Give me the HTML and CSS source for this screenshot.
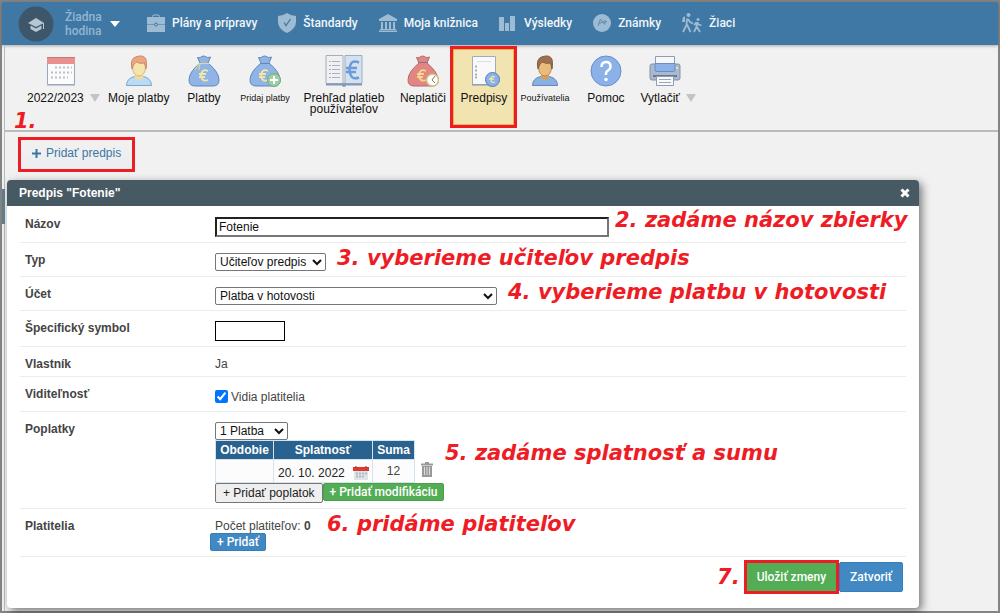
FILE: index.html
```
<!DOCTYPE html>
<html lang="sk">
<head>
  <meta charset="UTF-8" />
  <meta name="viewport" content="width=device-width, initial-scale=1" />
  <title>Predpisy - Platby</title>
  <link rel="stylesheet" href="styles.css">
</head>
<body>
<div class="frame">

  <!-- Horné menu -->
  <header class="topbar">
    <button class="profile" type="button">
      <svg class="avatar" viewBox="0 0 36 36">
        <circle cx="18" cy="18" r="17.500" fill="#3d566a"/>
        <path d="M10 17l8-5 8 5-8 4z" fill="#b5c7d4"/>
        <path d="M12.500 19.500v3.500l5.500 3 5.500-3v-3.500L18 22.500z" fill="#b5c7d4"/>
        <path d="M25.500 17v6" stroke="#b5c7d4"/>
      </svg>
      <span>Žiadna<br>hodina</span>
      <svg class="caret" viewBox="0 0 10 6"><path d="M0 0h10L5 6z" fill="#fff"/></svg>
    </button>
    <nav class="menu">
      <a href="#">
        <svg viewBox="0 0 18 20"><path d="M5.500 5V3.500Q5.500 2 7 2h4q1.500 0 1.500 1.500V5" fill="none" stroke="#a2bfd5"/><path d="M0 4h18v7H0zM0 11.500h18V19H0z" fill="#9dbbd2"/><path d="M0 11.500h18" stroke="#6c98bb"/><circle cx="9" cy="11.500" r="1.500" fill="#9dbbd2" stroke="#3f78a5"/></svg>
        Plány a prípravy</a>
      <a href="#">
        <svg viewBox="0 0 18 20"><path d="M9 0q4 3 9 3v6q0 7-9 11Q0 16 0 9V3q5 0 9-3z" fill="#9dbbd2"/><path d="M6 9.500l2 3 4.500-6.500" fill="none" stroke="#3f78a5" stroke-width="1.300"/></svg>
        Štandardy</a>
      <a href="#">
        <svg viewBox="0 0 18 20"><path d="M0 6l9-5 9 5v2H0zM2 9h2v7H2zM6 9h2v7H6zM10 9h2v7h-2zM14 9h2v7h-2zM1 16h16v1H1zM0 17.500h18V19H0z" fill="#9dbbd2"/></svg>
        Moja knižnica</a>
      <a href="#">
        <svg viewBox="0 0 18 20"><path d="M0 4h5v14H0zM6 10h4v8H6zM11 3h5v15h-5z" fill="#9dbbd2"/></svg>
        Výsledky</a>
      <a href="#">
        <svg viewBox="0 0 18 20"><circle cx="9" cy="10" r="9" fill="#9dbbd2"/><path d="M5 13l2.500-7 4 5.500M6 10.500l4-1.500M12 7v4M10 9l4-.5" fill="none" stroke="#5f8eb3"/></svg>
        Známky</a>
      <a href="#">
        <svg class="walkers" viewBox="0 0 20 20"><g fill="#9dbbd2"><circle cx="6.500" cy="2" r="2"/><circle cx="16" cy="6.500" r="1.500"/><path d="M1 4l2-.5V9H0z"/></g><path d="M5 5.500L4.500 12 1 19M5 11.500l3.500 7.500M6 6l2 3 3 1.500M15 9l-.5 5-2.500 5M15 14l3 5M15.500 9.500l1 2 3 1M14.500 9.500L12 12" fill="none" stroke="#9dbbd2" stroke-width="1.800"/></svg>
        Žiaci</a>
    </nav>
  </header>

  <div class="page">
    <span class="side-tab"></span>

    <!-- Lišta s nástrojmi -->
    <div class="toolbar">
      <a class="tool has-drop" href="#">
        <svg viewBox="0 0 32 32"><path d="M2.500 2.500h27v27h-27z" fill="#fbfbfb" stroke="#9aa8bb"/><path d="M2 2h28v7H2z" fill="#e8918e"/><path d="M2 2.500h28" stroke="#c87676"/><path d="M10 12.500h17M6 17.500h21M6 22.500h17" stroke="#b9c1cd" stroke-width="2" stroke-dasharray="2 2"/><path d="M2 30h28" stroke="#96a5bb"/></svg>
        <span class="tool-label">2022/2023 <i class="drop"></i></span>
      </a>
      <a class="tool" href="#">
        <svg viewBox="0 0 32 32"><path d="M3.500 30.500q0-7 8-9h9q8 2 8 9z" fill="#b9dcf2" stroke="#7ea7c8"/><path d="M12 17h8v6q-4 4-8 0z" fill="#f0dc9c"/><path d="M9.500 9q0-4 6.500-4t6.500 4v4q-1 8-6.500 8T9.500 13z" fill="#f5e5ac" stroke="#d5b778"/><path d="M9 14Q6.500 3 14 1.500q7-2 9 3 1 4 0 9.500l-1.500-6q-5 1-8-1-3 1-4.500 7z" fill="#eda681" stroke="#c6886a"/></svg>
        <span class="tool-label">Moje platby</span>
      </a>
      <a class="tool" href="#">
        <svg viewBox="0 0 32 32"><path d="M12 8L9.500 2.500q3 1 4-1 2.500-1 4 0 2 2 5 .5L20 8q11 9 11 17 0 6-6 6H7q-6 0-6-6 0-8 11-17z" fill="#8fb4e5" stroke="#6287bb"/><path d="M11 8.500h10M11 9l-4 6M12 9l-1 6" stroke="#e5d697" fill="none"/><path d="M20 16q-6-3-7 4.500 1 7 7 4.500M11 19h7M11 22h6" fill="none" stroke="#f3e6a9" stroke-width="1.800"/></svg>
        <span class="tool-label">Platby</span>
      </a>
      <a class="tool" href="#">
        <svg viewBox="0 0 32 32"><path d="M12 8L9.500 2.500q3 1 4-1 2.500-1 4 0 2 2 5 .5L20 8q11 9 11 17 0 6-6 6H7q-6 0-6-6 0-8 11-17z" fill="#8fb4e5" stroke="#6287bb"/><path d="M11 8.500h10" stroke="#6287bb"/><path d="M19 16q-6-3-7 4.500 1 7 7 4.500M10 19h7M10 22h6" fill="none" stroke="#f3e6a9" stroke-width="1.800"/><circle cx="25" cy="25" r="6.500" fill="#9bd0a4" stroke="#75aa80"/><path d="M21 25h8M25 21v8" stroke="#fff" stroke-width="2"/></svg>
        <span class="tool-label small">Pridaj platby</span>
      </a>
      <a class="tool wide" href="#">
        <svg class="book" viewBox="0 0 38 32"><path d="M1 .5h17v28H1z" fill="#eef0f2" stroke="#a5afbd"/><path d="M20 .5h17v28H20z" fill="#d5e1ed" stroke="#97aec8"/><path d="M1 29.500h36" stroke="#8199bb" stroke-width="2"/><circle cx="19" cy="30" r="2" fill="#8199bb"/><path d="M4 6.500h2m1 0h8M4 10.500h2m1 0h8M4 14.500h2m1 0h8M4 18.500h2m1 0h8M4 22.500h2m1 0h8" stroke="#aab1bb"/><path d="M34 7.500q-9-4-9.500 7.500 1 11 9.500 7.500M21 13h11M21 17h10" fill="none" stroke="#6b9bdc" stroke-width="2.500"/></svg>
        <span class="tool-label">Prehľad platieb používateľov</span>
      </a>
      <a class="tool" href="#">
        <svg viewBox="0 0 32 32"><path d="M12 8L9.500 2.500q3 1 4-1 2.500-1 4 0 2 2 5 .5L20 8q11 9 11 17 0 6-6 6H7q-6 0-6-6 0-8 11-17z" fill="#e28684" stroke="#b46b70"/><path d="M11 7.500h10" stroke="#8b6d92"/><path d="M19 16q-6-3-7 4.500 1 7 7 4.500M10 19h7M10 22h6" fill="none" stroke="#f2d88e" stroke-width="1.800"/><circle cx="25.500" cy="25" r="6" fill="#fff" stroke="#d6bb78" stroke-width="1.500"/><path d="M28 21l-3 4 3 3" fill="none" stroke="#777"/></svg>
        <span class="tool-label">Neplatiči</span>
      </a>
      <a class="tool active" href="#">
        <svg viewBox="0 0 32 32"><path d="M4.500 1.500h23v28h-23z" fill="#f9f9f9" stroke="#9eacbe"/><path d="M4 30h24" stroke="#8197b7"/><path d="M9 6.500h14" stroke="#dadde1"/><path d="M7 11.500h2M7 15.500h2M7 19.500h2M7 22.500h2" stroke="#a8b0bd" stroke-width="2"/><circle cx="24.500" cy="24.500" r="7" fill="#8ab2e9" stroke="#527fba"/><path d="M27 22q-4-2-4 2.500 0 4 4 2.500M21 24h5" fill="none" stroke="#f3e6a9" stroke-width="1.300"/></svg>
        <span class="tool-label">Predpisy</span>
      </a>
      <a class="tool" href="#">
        <svg viewBox="0 0 32 32"><path d="M3.500 30.500q0-7 8-9h9q8 2 8 9z" fill="#8ab0e2" stroke="#6488be"/><path d="M12 17h8v6q-4 4-8 0z" fill="#d5a05f"/><path d="M9.500 9q0-4 6.500-4t6.500 4v4q-1 8-6.500 8T9.500 13z" fill="#e8bd7c" stroke="#bb8850"/><path d="M9 14Q6.500 3 14 1.500q7-2 9 3 1 4 0 9.500l-1.500-6q-5 1-8-1-3 1-4.500 7z" fill="#a06f50" stroke="#835a42"/></svg>
        <span class="tool-label small">Používatelia</span>
      </a>
      <a class="tool" href="#">
        <svg viewBox="0 0 32 32"><circle cx="16" cy="16" r="15" fill="#8ab1e8" stroke="#678fc4"/><path d="M11.500 12q0-5 4.500-5t4.500 4.500q0 2.500-2.500 4t-2 4.500" fill="none" stroke="#fff" stroke-width="2.500"/><circle cx="16" cy="24.500" r="1.700" fill="#fff"/></svg>
        <span class="tool-label">Pomoc</span>
      </a>
      <a class="tool has-drop" href="#">
        <svg viewBox="0 0 32 32"><rect x="1" y="9" width="30" height="16" rx="2" fill="#abb9cc" stroke="#8393aa"/><path d="M6.500 1.500h19V10h-19z" fill="#f7f7f7" stroke="#8d9db3"/><path d="M6 8.500h20V15q0 1.500-2 1.500H8q-2 0-2-1.500z" fill="#8ab1e8" stroke="#678fc4"/><path d="M4 21h24" stroke="#68798f" stroke-width="2"/><path d="M7.500 21.500h17v9h-17z" fill="#f9f9f9" stroke="#8d9db3"/><path d="M10 24.500h12M10 27.500h12" stroke="#99a5b5"/><path d="M27 12h2v2h-2z" fill="#f2e2a3"/></svg>
        <span class="tool-label">Vytlačiť <i class="drop"></i></span>
      </a>
      <span class="note note-toolbar">1.</span>
    </div>

    <main class="content">
      <button class="add-rule" type="button"><svg viewBox="0 0 9 9"><path d="M0 4.500h9M4.500 0v9" stroke="#3d76a3" stroke-width="2"/></svg>Pridať predpis</button>

      <!-- Dialóg predpisu -->
      <section class="dialog">
        <div class="dialog-head">
          <h2>Predpis "Fotenie"</h2>
          <button class="close" type="button" aria-label="Zavrieť"><svg viewBox="0 0 10 10"><path d="M1.500 1.500l7 7M8.500 1.500l-7 7" stroke="#fff" stroke-width="3"/></svg></button>
        </div>
        <form class="dialog-body">
          <div class="row">
            <label class="name" for="nazov">Názov</label>
            <div class="value"><input class="text-input" id="nazov" type="text" value="Fotenie"><span class="note high">2. zadáme názov zbierky</span></div>
          </div>
          <div class="row">
            <label class="name" for="typ">Typ</label>
            <div class="value"><select class="type" id="typ"><option>Učiteľov predpis</option></select><span class="note">3. vyberieme učiteľov predpis</span></div>
          </div>
          <div class="row">
            <label class="name" for="ucet">Účet</label>
            <div class="value"><select class="account" id="ucet"><option>Platba v hotovosti</option></select><span class="note">4. vyberieme platbu v hotovosti</span></div>
          </div>
          <div class="row">
            <label class="name" for="symbol">Špecifický symbol</label>
            <div class="value"><input class="symbol" id="symbol" type="text"></div>
          </div>
          <div class="row">
            <span class="name">Vlastník</span>
            <div class="value">Ja</div>
          </div>
          <div class="row">
            <span class="name">Viditeľnosť</span>
            <div class="value"><label class="check"><input type="checkbox" checked> Vidia platitelia</label></div>
          </div>
          <div class="row">
            <label class="name" for="poplatky">Poplatky</label>
            <div class="value">
              <select class="count" id="poplatky"><option>1 Platba</option></select>
              <div class="fees">
                <table>
                  <thead><tr><th class="period">Obdobie</th><th class="due">Splatnosť</th><th class="sum">Suma</th></tr></thead>
                  <tbody><tr>
                    <td></td>
                    <td><span class="date">20. 10. 2022 <svg viewBox="0 0 16 14"><path d="M1 4h14v10H1z" fill="#dfe4e7"/><path d="M0 1h16v4H0z" fill="#dc3b33"/><path d="M3 0v2M13 0v2" stroke="#8b2924"/><path d="M3 7.500h11M3 10.500h8" stroke="#a9bbc5" stroke-width="2" stroke-dasharray="2 1"/></svg></span></td>
                    <td class="amount">12</td>
                  </tr></tbody>
                </table>
                <button class="trash" type="button" aria-label="Zmazať"><svg viewBox="0 0 12 15"><path d="M0 2.500h12M4 1h4" stroke="#999" stroke-width="2"/><path d="M1 4h10v11H1z" fill="#999"/><path d="M3.500 5v8M6 5v8M8.500 5v8" stroke="#ddd"/></svg></button>
                <span class="note">5. zadáme splatnosť a sumu</span>
              </div>
              <div class="fee-buttons"><button class="plain" type="button">+ Pridať poplatok</button><button class="btn green" type="button">+ Pridať modifikáciu</button></div>
            </div>
          </div>
          <div class="row">
            <span class="name">Platitelia</span>
            <div class="value">
              <div class="payers">Počet platiteľov: <b>0</b><span class="note">6. pridáme platiteľov</span></div>
              <button class="btn blue payers-add" type="button">+ Pridať</button>
            </div>
          </div>
          <div class="dialog-foot">
            <span class="note inline">7.</span>
            <button class="btn green save" type="submit">Uložiť zmeny</button>
            <button class="btn blue big" type="button">Zatvoriť</button>
          </div>
        </form>
      </section>
    </main>
  </div>
</div>
</body>
</html>
```
FILE: styles.css
```
* {
  box-sizing: border-box;
}
body {
  margin: 0;
  font-family: "Liberation Sans", Arial, sans-serif;
  font-size: 12px;
  line-height: 14px;
  color: #444;
  background: #f1f1f1;
}
button, input, select {
  font: inherit;
  margin: 0;
}
button {
  cursor: pointer;
}
a {
  color: inherit;
  text-decoration: none;
}
svg {
  display: block;
  flex: none;
}
.frame {
  display: flex;
  flex-direction: column;
  min-height: 100vh;
  border: 2px solid #848484;
}

/* horné menu */
.topbar {
  display: flex;
  align-items: center;
  height: 43px;
  background: #3f78a5;
  font-family: Roboto, "Liberation Sans", sans-serif;
  box-shadow: 0 1px 3px rgba(0,0,0,0.3);
  position: relative;
}
.profile {
  display: flex;
  align-items: center;
  width: 145px;
  padding: 0 0 0 16px;
  border: 0;
  background: none;
  color: #93b6cf;
  font-size: 12px;
  font-weight: 500;
  text-align: left;
}
.profile .avatar {
  width: 36px;
  height: 36px;
  margin-right: 11px;
}
.profile .caret {
  width: 10px;
  height: 6px;
  margin-left: 8px;
}
.menu {
  display: flex;
  gap: 21px;
  padding-bottom: 2px;
}
.menu a {
  display: flex;
  align-items: center;
  gap: 7px;
  color: #f2f6f9;
  font-weight: 500;
  white-space: nowrap;
}
.menu svg {
  width: 18px;
  height: 20px;
}
.menu .walkers {
  width: 20px;
}

.page {
  position: relative;
  flex: 1;
  margin-left: 2px;
  border-left: 1px solid #bbb;
}
.side-tab {
  position: absolute;
  left: -3px;
  top: 144px;
  width: 3px;
  height: 35px;
  background: #607b89;
}

/* nástroje */
.toolbar {
  position: relative;
  display: flex;
  height: 87px;
  padding: 4px 0 5px 18px;
  border-bottom: 2px solid #bbb;
  color: #111;
}
.tool {
  display: flex;
  flex-direction: column;
  align-items: center;
  min-width: 61px;
  padding: 6px 4px 0;
  text-align: center;
}
.tool svg {
  width: 32px;
  height: 32px;
}
.tool .book {
  width: 38px;
}
.has-drop svg {
  margin-right: 6px;
}
.tool-label {
  margin-top: 6px;
  line-height: 11px;
  white-space: nowrap;
}
.tool.wide {
  width: 97px;
}
.wide .tool-label {
  white-space: normal;
}
.tool-label.small {
  font-size: 9px;
}
.drop {
  display: inline-block;
  margin-left: 3px;
  border: 5px solid transparent;
  border-top: 8px solid #c4c4c4;
  border-bottom: 0;
}
.tool.active {
  background: #f1e4b1;
  box-shadow: inset 0 0 0 1px #e4bb4b;
  outline: 3px solid #ee1c25;
}

/* červené poznámky */
.note {
  position: absolute;
  left: 100%;
  top: -6px;
  margin-left: 11px;
  color: #ee1c25;
  font: italic bold 21px/22px "DejaVu Sans", Verdana, sans-serif;
  white-space: nowrap;
}
.note.high {
  top: -8px;
  margin-left: 6px;
}
.note-toolbar {
  left: 9px;
  top: 65px;
  margin-left: 0;
}
.note.inline {
  position: static;
  margin: 0 4px 0 0;
}

.content {
  padding: 5px 79px 2px 2px;
}
.add-rule {
  display: flex;
  align-items: center;
  gap: 5px;
  height: 35px;
  margin: 0 0 8px 11px;
  padding: 0 11px 3px;
  border: 3px solid #ee1c25;
  background: linear-gradient(#f1f1f1, #ebedef);
  color: #3d76a3;
}
.add-rule svg {
  width: 9px;
  height: 9px;
}

/* dialóg */
.dialog {
  border-radius: 4px;
  background: #fff;
  box-shadow: 3px 3px 8px rgba(0,0,0,0.5);
}
.dialog-head {
  display: flex;
  align-items: center;
  justify-content: space-between;
  height: 26px;
  padding: 0 9px 0 12px;
  border-radius: 4px 4px 0 0;
  background: #475a64;
  color: #fff;
}
.dialog-head h2 {
  margin: 0;
  font-size: 12px;
  line-height: 14px;
}
.close {
  padding: 0;
  border: 0;
  background: none;
}
.close svg {
  width: 10px;
  height: 10px;
}
.dialog-body {
  padding: 1px 13px 0;
}
.row {
  display: flex;
  padding: 10px 0 5px 5px;
  border-bottom: 1px solid #ececec;
}
.name {
  width: 190px;
  font-weight: bold;
}
.value {
  position: relative;
}
.value input[type="text"],
.value select {
  display: block;
  color: #111;
}
.value .text-input {
  width: 394px;
  height: 20px;
  padding: 0 2px;
  border: 2px inset #767676;
}
.value .symbol {
  width: 70px;
  height: 20px;
  border: 1px solid #000;
}
.value select {
  height: 18px;
  border: 1px solid #767676;
  border-radius: 2px;
  background: #fff;
}
.type {
  width: 111px;
}
.account {
  width: 282px;
}
.count {
  width: 73px;
}
.check {
  display: flex;
  align-items: center;
  gap: 3px;
  height: 19px;
}
.check input {
  width: 13px;
  height: 13px;
}
.fees {
  position: relative;
  display: flex;
  align-items: center;
  width: 219px;
}
.fees .note {
  top: 2px;
}
.fees table {
  border-collapse: collapse;
}
.fees th,
.fees td {
  padding: 0;
  border: 1px solid #d5e3ee;
}
.fees th {
  height: 19px;
  background: #2a628f;
  color: #fff;
}
.fees td {
  height: 23px;
  background: #fcfcfc;
}
.period {
  width: 58px;
}
.due {
  width: 99px;
}
.sum {
  width: 42px;
}
.fees .date {
  display: flex;
  align-items: flex-end;
  gap: 8px;
  padding: 3px 0 0 4px;
  color: #222;
}
.date svg {
  width: 16px;
  height: 14px;
}
.amount {
  text-align: center;
}
.trash {
  margin: 16px 0 0 6px;
  padding: 0;
  border: 0;
  background: none;
}
.trash svg {
  width: 12px;
  height: 15px;
}
.fee-buttons {
  display: flex;
}
.plain {
  height: 20px;
  padding: 0 7px;
  border: 1px solid #767676;
  border-radius: 2px;
  background: #efefef;
  color: #222;
}
.btn {
  height: 18px;
  padding: 0 6px;
  border: 1px solid #357ebd;
  border-radius: 2px;
  color: #fff;
  font-family: Roboto, "Liberation Sans", sans-serif;
  font-weight: 500;
  white-space: nowrap;
}
.btn.green {
  background: #53ad55;
  border-color: #4a9f4c;
}
.btn.blue {
  background: #4288c2;
  border-color: #357ebd;
}
.payers {
  position: relative;
  width: 101px;
  white-space: nowrap;
}
.payers-add {
  display: block;
  margin-left: -5px;
}
.dialog-foot {
  display: flex;
  align-items: center;
  justify-content: flex-end;
  height: 51px;
  padding: 0 3px 11px 0;
}
.btn.big {
  height: 30px;
  padding: 0 10px;
}
.btn.save {
  height: 34px;
  padding: 0 10px;
  border: 3px solid #ee1c25;
  border-radius: 0;
}
```
